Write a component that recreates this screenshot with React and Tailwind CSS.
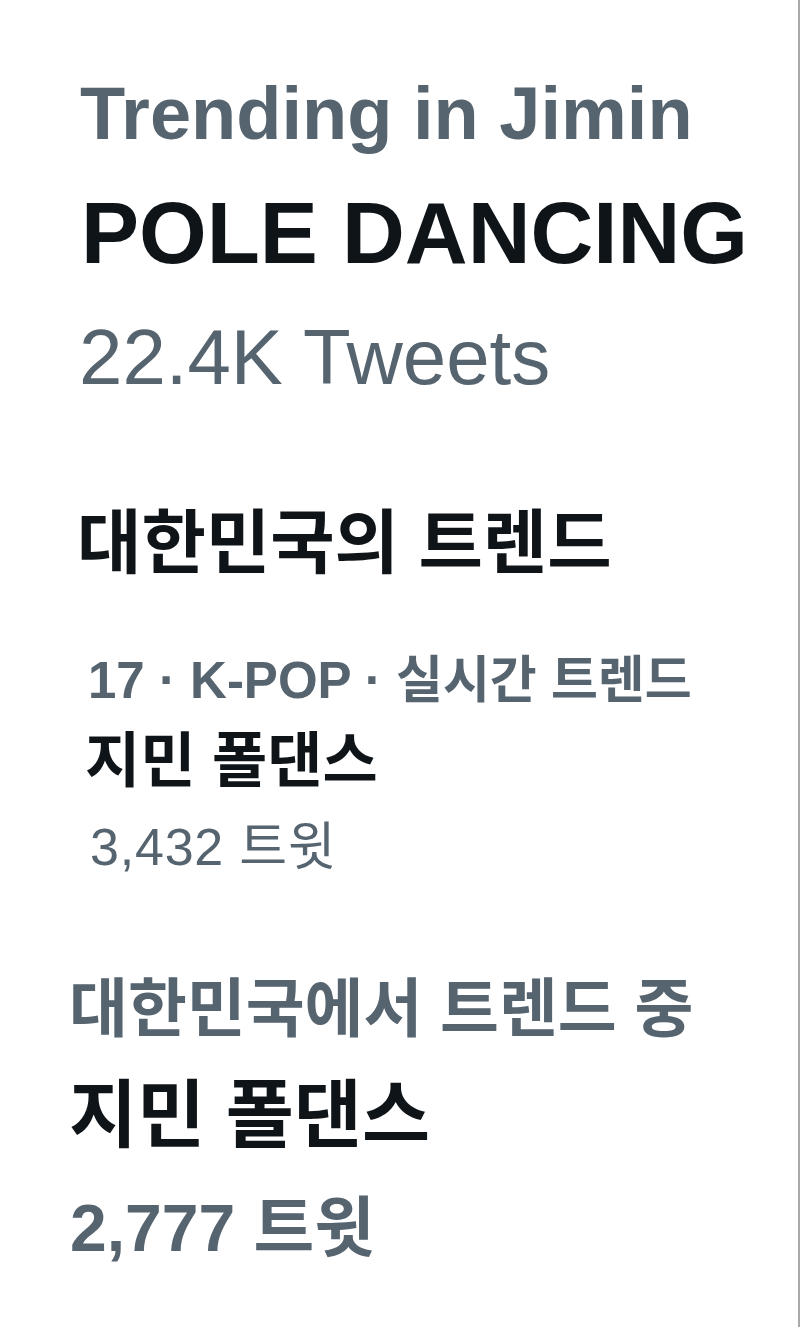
export default function App() {
  const font = { fontFamily: '"Liberation Sans", "Noto Sans CJK KR", sans-serif' };
  return (
    <div className="w-[800px] h-[1327px] bg-white flex overflow-hidden" style={font}>
      <div className="flex-1 flex flex-col">
        <div className="ml-[80px] mt-[77px] text-[74px] leading-[74px] font-bold text-[#566470] whitespace-nowrap">Trending in Jimin</div>
        <div className="ml-[81px] mt-[38px] text-[87px] leading-[87px] font-bold text-[#0f1419] whitespace-nowrap">POLE DANCING</div>
        <div className="ml-[79px] mt-[42px] text-[78px] leading-[78px] text-[#566470] whitespace-nowrap">22.4K Tweets</div>

        <div className="ml-[77px] mt-[113px] text-[70px] leading-[70px] font-bold text-[#0f1419] whitespace-nowrap">대한민국의 트렌드</div>
        <div className="ml-[88px] mt-[76px] text-[51px] leading-[51px] font-bold text-[#566470] whitespace-nowrap">17 · K-POP · 실시간 트렌드</div>
        <div className="ml-[85px] mt-[26px] text-[60px] leading-[60px] font-bold text-[#0f1419] whitespace-nowrap">지민 폴댄스</div>
        <div className="ml-[90px] mt-[29px] text-[52px] leading-[52px] tracking-[0.015em] text-[#566470] whitespace-nowrap">3,432 트윗</div>

        <div className="ml-[69px] mt-[104px] text-[64px] leading-[64px] font-bold text-[#566470] whitespace-nowrap">대한민국에서 트렌드 중</div>
        <div className="ml-[69px] mt-[38px] text-[74px] leading-[74px] font-bold text-[#0f1419] whitespace-nowrap">지민 폴댄스</div>
        <div className="ml-[70px] mt-[42px] text-[66px] leading-[66px] font-bold text-[#566470] whitespace-nowrap">2,777 트윗</div>
      </div>
      <div className="w-[2px] h-full bg-[#a9a9a9]" />
    </div>
  );
}
